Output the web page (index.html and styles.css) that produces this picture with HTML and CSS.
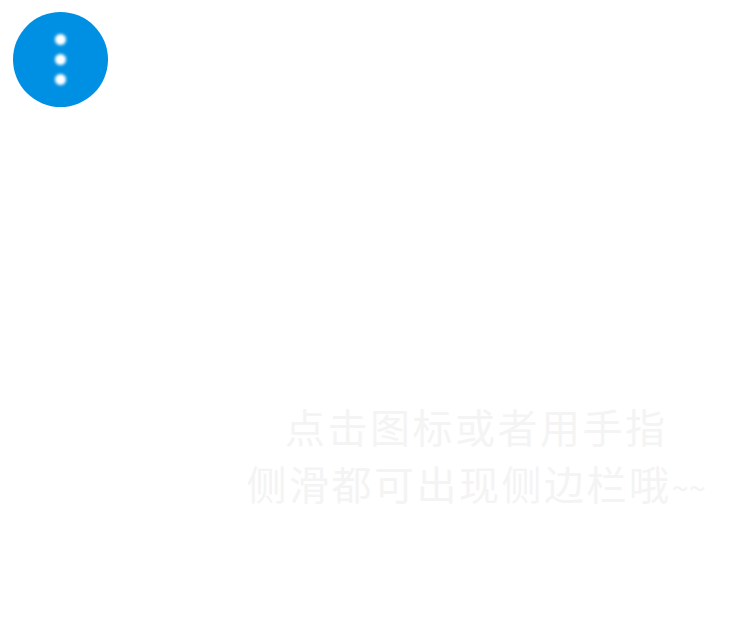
FILE: index.html
```html
<!DOCTYPE html>
<html lang="zh">
<head>
<meta charset="utf-8">
<title>提示</title>
<link rel="stylesheet" href="styles.css">
</head>
<body>
<div class="page">
  <button class="menu" aria-label="menu">
    <span class="dot"></span><span class="dot"></span><span class="dot"></span>
  </button>
  <p class="hint">点击图标或者用手指<br>侧滑都可出现侧边栏哦<span class="tilde">~~</span></p>
</div>
</body>
</html>
```
FILE: styles.css
```css
html, body { margin: 0; padding: 0; background: #fff; height: 100%; overflow: hidden; }
.page { width: 743px; height: 622px; box-sizing: border-box; padding: 12px 0 0 13px; display: flex; flex-direction: column; }
.menu { width: 95px; height: 95px; border: 0; padding: 0; border-radius: 50%; background: #0090e3; display: flex; flex-direction: column; align-items: center; justify-content: center; gap: 9px; }
.dot { width: 11px; height: 11px; border-radius: 50%; background: #fff; filter: blur(1.5px); }
.hint { margin: 291px 37px 0 0; text-align: center; font-family: "Noto Sans CJK SC", sans-serif; font-weight: 400; font-size: 40px; line-height: 57px; letter-spacing: 2.5px; color: #f4f4f4; align-self: flex-end; white-space: nowrap; }
.tilde { letter-spacing: 0; font-size: 31px; }
```
